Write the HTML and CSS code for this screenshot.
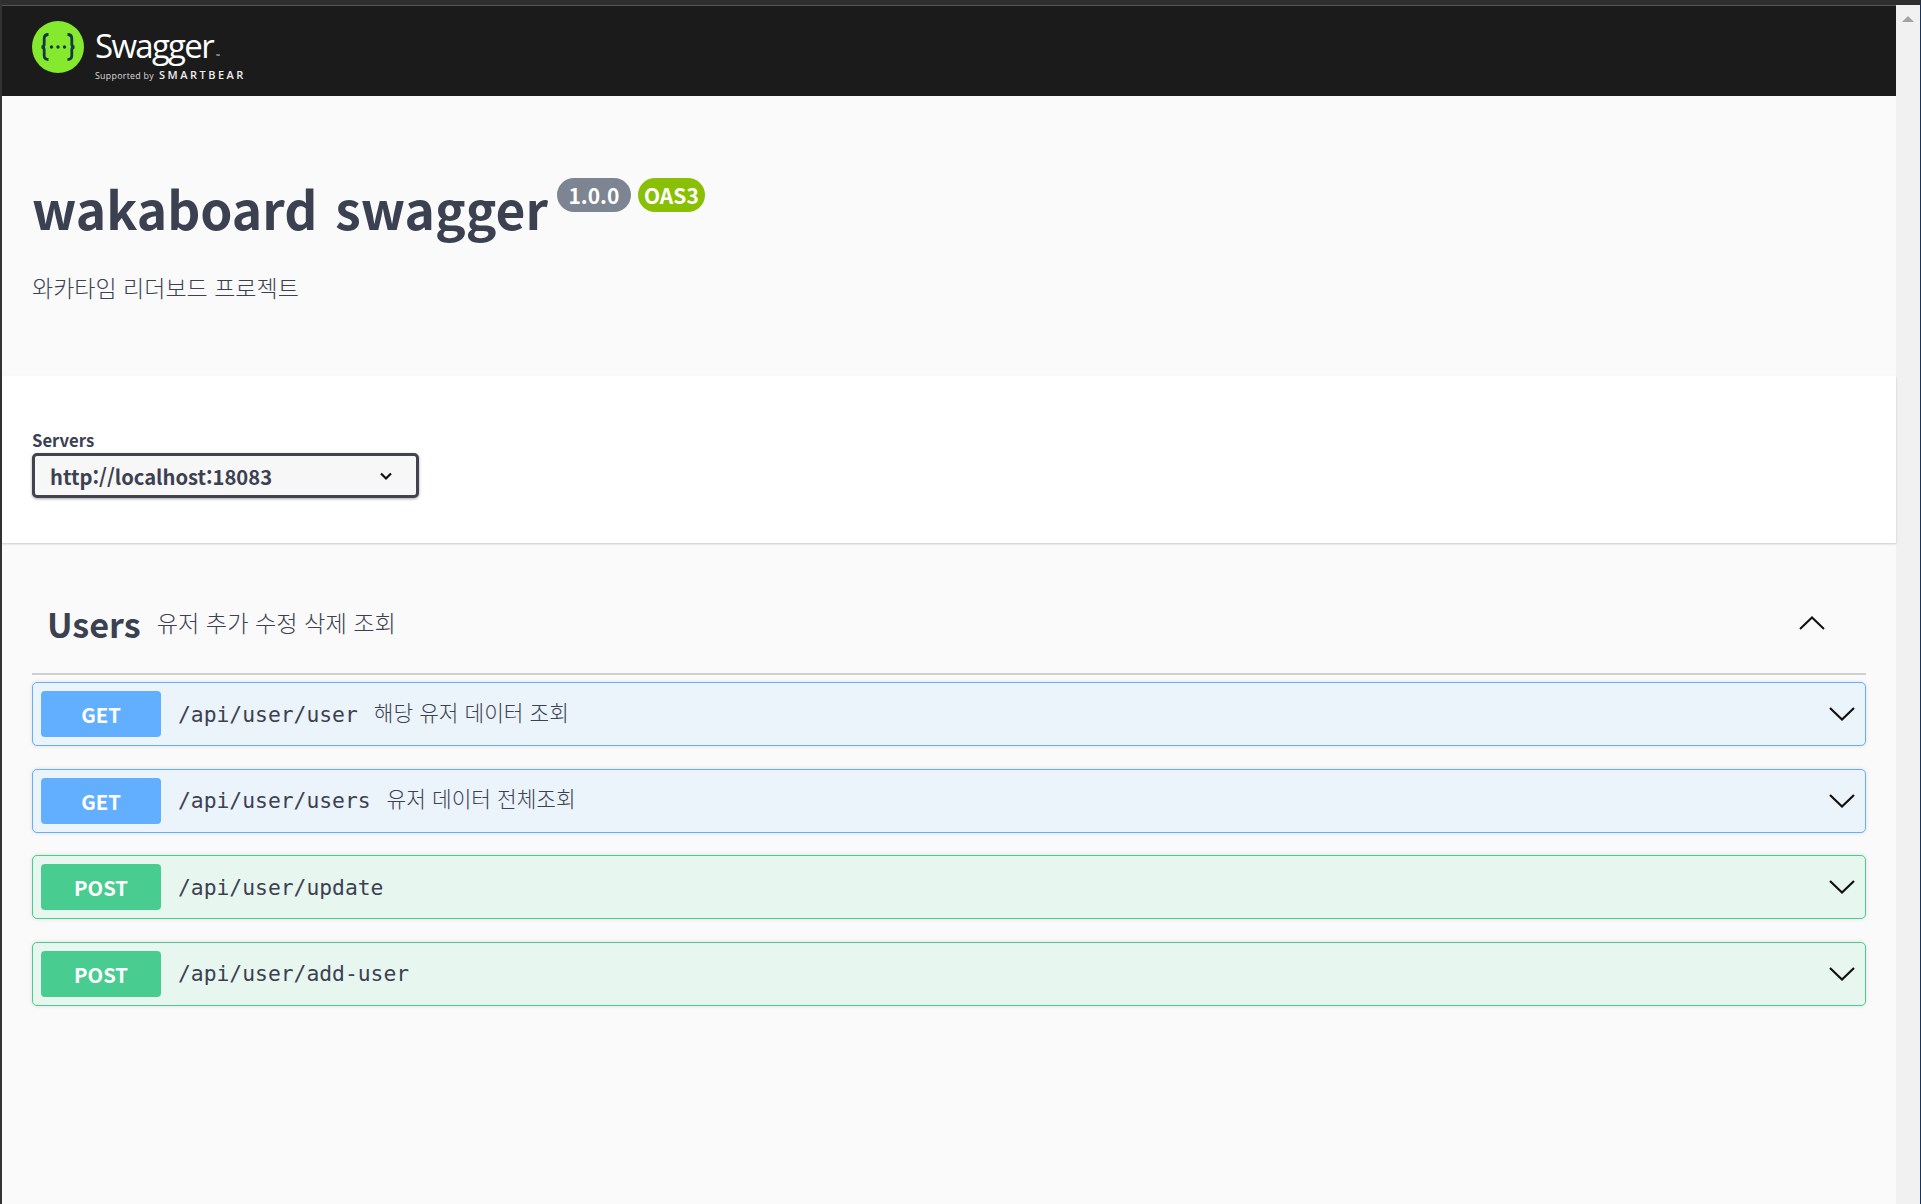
FILE: index.html
```html
<!DOCTYPE html>
<html lang="ko">
<head>
<meta charset="utf-8">
<title>wakaboard swagger</title>
<link rel="stylesheet" href="styles.css">
</head>
<body>
<div class="window">
  <div class="page">
    <header class="topbar">
      <svg class="logo-mark" viewBox="0 0 52 52" aria-hidden="true">
        <circle cx="26" cy="26" r="26" fill="#85ea2d"/>
        <path d="M16.500 13.500c-3.200 0-4.300 1.200-4.300 4v5.600c0 1.800-.9 2.900-2.700 2.900 1.800 0 2.700 1.100 2.700 2.900v5.600c0 2.800 1.100 4 4.300 4M35.500 13.500c3.200 0 4.300 1.200 4.300 4v5.600c0 1.800.9 2.900 2.700 2.900-1.800 0-2.700 1.100-2.700 2.900v5.600c0 2.800-1.100 4-4.300 4" fill="none" stroke="#173647" stroke-width="2.800"/>
        <circle cx="19.500" cy="26" r="1.700" fill="#173647"/>
        <circle cx="26" cy="26" r="1.700" fill="#173647"/>
        <circle cx="32.500" cy="26" r="1.700" fill="#173647"/>
      </svg>
      <div class="brand">
        <div class="brand-name">Swagger<span class="brand-tm">™</span></div>
        <div class="brand-sub"><span class="brand-by">Supported by</span><span class="brand-bear">SMARTBEAR</span></div>
      </div>
    </header>

    <section class="info">
      <div class="title-row">
        <h1 class="title">wakaboard swagger</h1>
        <span class="badge badge-version">1.0.0</span>
        <span class="badge badge-oas">OAS3</span>
      </div>
      <p class="description">와카타임 리더보드 프로젝트</p>
    </section>

    <section class="servers">
      <label class="servers-label">Servers</label>
      <div class="select">
        <span>http://localhost:18083</span>
        <svg class="select-arrow" viewBox="0 0 20 20" aria-hidden="true"><path d="M5 7.500l5 5 5-5" fill="none" stroke="#111" stroke-width="2.200"/></svg>
      </div>
    </section>

    <main class="ops">
      <div class="tag">
        <div class="tag-text"><h3 class="tag-name">Users</h3><span class="tag-desc">유저 추가 수정 삭제 조회</span></div>
        <svg class="tag-arrow" viewBox="0 0 26 14" aria-hidden="true"><path d="M1 13L13 1.500 25 13" fill="none" stroke="#111" stroke-width="2"/></svg>
      </div>

      <div class="op op-get">
        <span class="method">GET</span><span class="path">/api/user/user</span><span class="summary">해당 유저 데이터 조회</span>
        <svg class="op-arrow" viewBox="0 0 26 14" aria-hidden="true"><path d="M1 1l12 11.500L25 1" fill="none" stroke="#111" stroke-width="2.200"/></svg>
      </div>
      <div class="op op-get">
        <span class="method">GET</span><span class="path">/api/user/users</span><span class="summary">유저 데이터 전체조회</span>
        <svg class="op-arrow" viewBox="0 0 26 14" aria-hidden="true"><path d="M1 1l12 11.500L25 1" fill="none" stroke="#111" stroke-width="2.200"/></svg>
      </div>
      <div class="op op-post">
        <span class="method">POST</span><span class="path">/api/user/update</span>
        <svg class="op-arrow" viewBox="0 0 26 14" aria-hidden="true"><path d="M1 1l12 11.500L25 1" fill="none" stroke="#111" stroke-width="2.200"/></svg>
      </div>
      <div class="op op-post">
        <span class="method">POST</span><span class="path">/api/user/add-user</span>
        <svg class="op-arrow" viewBox="0 0 26 14" aria-hidden="true"><path d="M1 1l12 11.500L25 1" fill="none" stroke="#111" stroke-width="2.200"/></svg>
      </div>
    </main>
  </div>
  <div class="scrollbar"><span class="scroll-up"></span></div>
</div>
</body>
</html>
```
FILE: styles.css
```css
* { box-sizing: border-box; }
html, body { margin: 0; height: 100%; overflow: hidden; }
body {
  background: #1b1b1b;
  font-family: "Noto Sans CJK KR", "Noto Sans", sans-serif;
  color: #3b4151;
}
.window {
  display: flex;
  height: 1204px;
  border-top: 5px solid #2f2f2f;
  border-left: 2px solid #333;
  border-right: 1px solid #16325c;
}
.page { flex: 1; min-width: 0; background: #fafafa; display: flex; flex-direction: column; }
.scrollbar { width: 24px; background: #f1f1f1; padding-top: 11px; display: flex; justify-content: center; }
.scroll-up {
  width: 0; height: 0;
  border-left: 6px solid transparent;
  border-right: 6px solid transparent;
  border-bottom: 6px solid #a3a3a3;
}

.topbar {
  height: 91px;
  background: #1b1b1b;
  padding: 16px 0 0 30px;
  display: flex;
  align-items: flex-start;
  gap: 11px;
  box-shadow: inset 0 1px 0 #555;
}
.logo-mark { width: 52px; height: 52px; flex: none; }
.brand { color: #fff; font-family: "Open Sans", sans-serif; }
.brand-name { font-size: 33px; font-weight: 400; line-height: 40px; letter-spacing: -1.700px; margin-top: 5px; }
.brand-tm { font-size: 5px; letter-spacing: 0; margin-left: 3px; }
.brand-sub { display: flex; align-items: baseline; gap: 5px; line-height: 14px; margin-top: -8px; }
.brand-by { font-size: 8.800px; color: #ddd; letter-spacing: .3px; }
.brand-bear { font-size: 11px; letter-spacing: 2.500px; font-weight: 600; color: #eee; }

.info { height: 280px; padding: 74px 30px 0; }
.title-row { display: flex; align-items: flex-start; height: 66px; }
.title { margin: 5px 0 0; font-size: 51.500px; line-height: 66px; font-weight: 700; word-spacing: 3.500px; }
.badge {
  height: 34px;
  border-radius: 17px;
  color: #fff;
  font-size: 21px;
  font-weight: 700;
  line-height: 34px;
  text-align: center;
  margin-top: 8px;
}
.badge-version { background: #7d8492; width: 74px; margin-left: 9px; }
.badge-oas { background: #89bf04; width: 67px; margin-left: 7px; }
.description { margin: 35px 0 0; font-size: 23px; line-height: 32px; font-weight: 300; }

.servers {
  height: 167px;
  background: #fff;
  padding: 52px 30px 0;
  box-shadow: 0 1px 2px rgba(0, 0, 0, .2);
  position: relative;
}
.servers-label { display: block; font-size: 16.700px; font-weight: 700; line-height: 25px; }
.select {
  width: 387px;
  height: 45px;
  border: 3px solid #41444e;
  border-radius: 5px;
  background: #f7f7f7;
  box-shadow: 0 1px 3px 0 rgba(0, 0, 0, .35);
  display: flex;
  align-items: center;
  justify-content: space-between;
  padding: 2px 20px 0 15px;
  font-size: 20.200px;
  font-weight: 700;
}
.select-arrow { width: 20px; height: 20px; margin-top: -2px; }

.ops { padding: 0 30px; }
.tag {
  height: 132px;
  margin-bottom: 7px;
  padding: 0 41px 0 15px;
  border-bottom: 2px solid #cfd0d4;
  display: flex;
  align-items: flex-end;
  justify-content: space-between;
}
.tag-text { display: flex; align-items: center; gap: 16px; height: 67px; padding-bottom: 34px; }
.tag-name { margin: 0; font-size: 34.200px; font-weight: 700; line-height: 46px; }
.tag-desc { font-size: 23.200px; line-height: 30px; font-weight: 300; margin-top: -2px; }
.tag-arrow { width: 26px; height: 14px; margin-bottom: 43px; }

.op {
  height: 64px;
  margin-bottom: 22.670px;
  border: 1.330px solid;
  border-radius: 5px;
  padding: 0 8px;
  display: flex;
  align-items: center;
  box-shadow: 0 0 4px rgba(0, 0, 0, .12);
}
.op-get { background: #ebf3fb; border-color: #61affe; }
.op-post { background: #e8f6f0; border-color: #49cc90; }
.method {
  width: 120px;
  height: 46px;
  border-radius: 4px;
  color: #fff;
  font-size: 20.300px;
  font-weight: 700;
  line-height: 46px;
  text-align: center;
  flex: none;
}
.op-get .method { background: #61affe; }
.op-post .method { background: #49cc90; }
.path { font-family: "DejaVu Sans Mono", monospace; font-size: 21.330px; margin-left: 17px; }
.summary { font-size: 21.400px; font-weight: 300; line-height: 28px; margin: -5px 0 0 16px; }
.op-arrow { width: 26px; height: 14px; margin-left: auto; margin-right: 2px; }
```
